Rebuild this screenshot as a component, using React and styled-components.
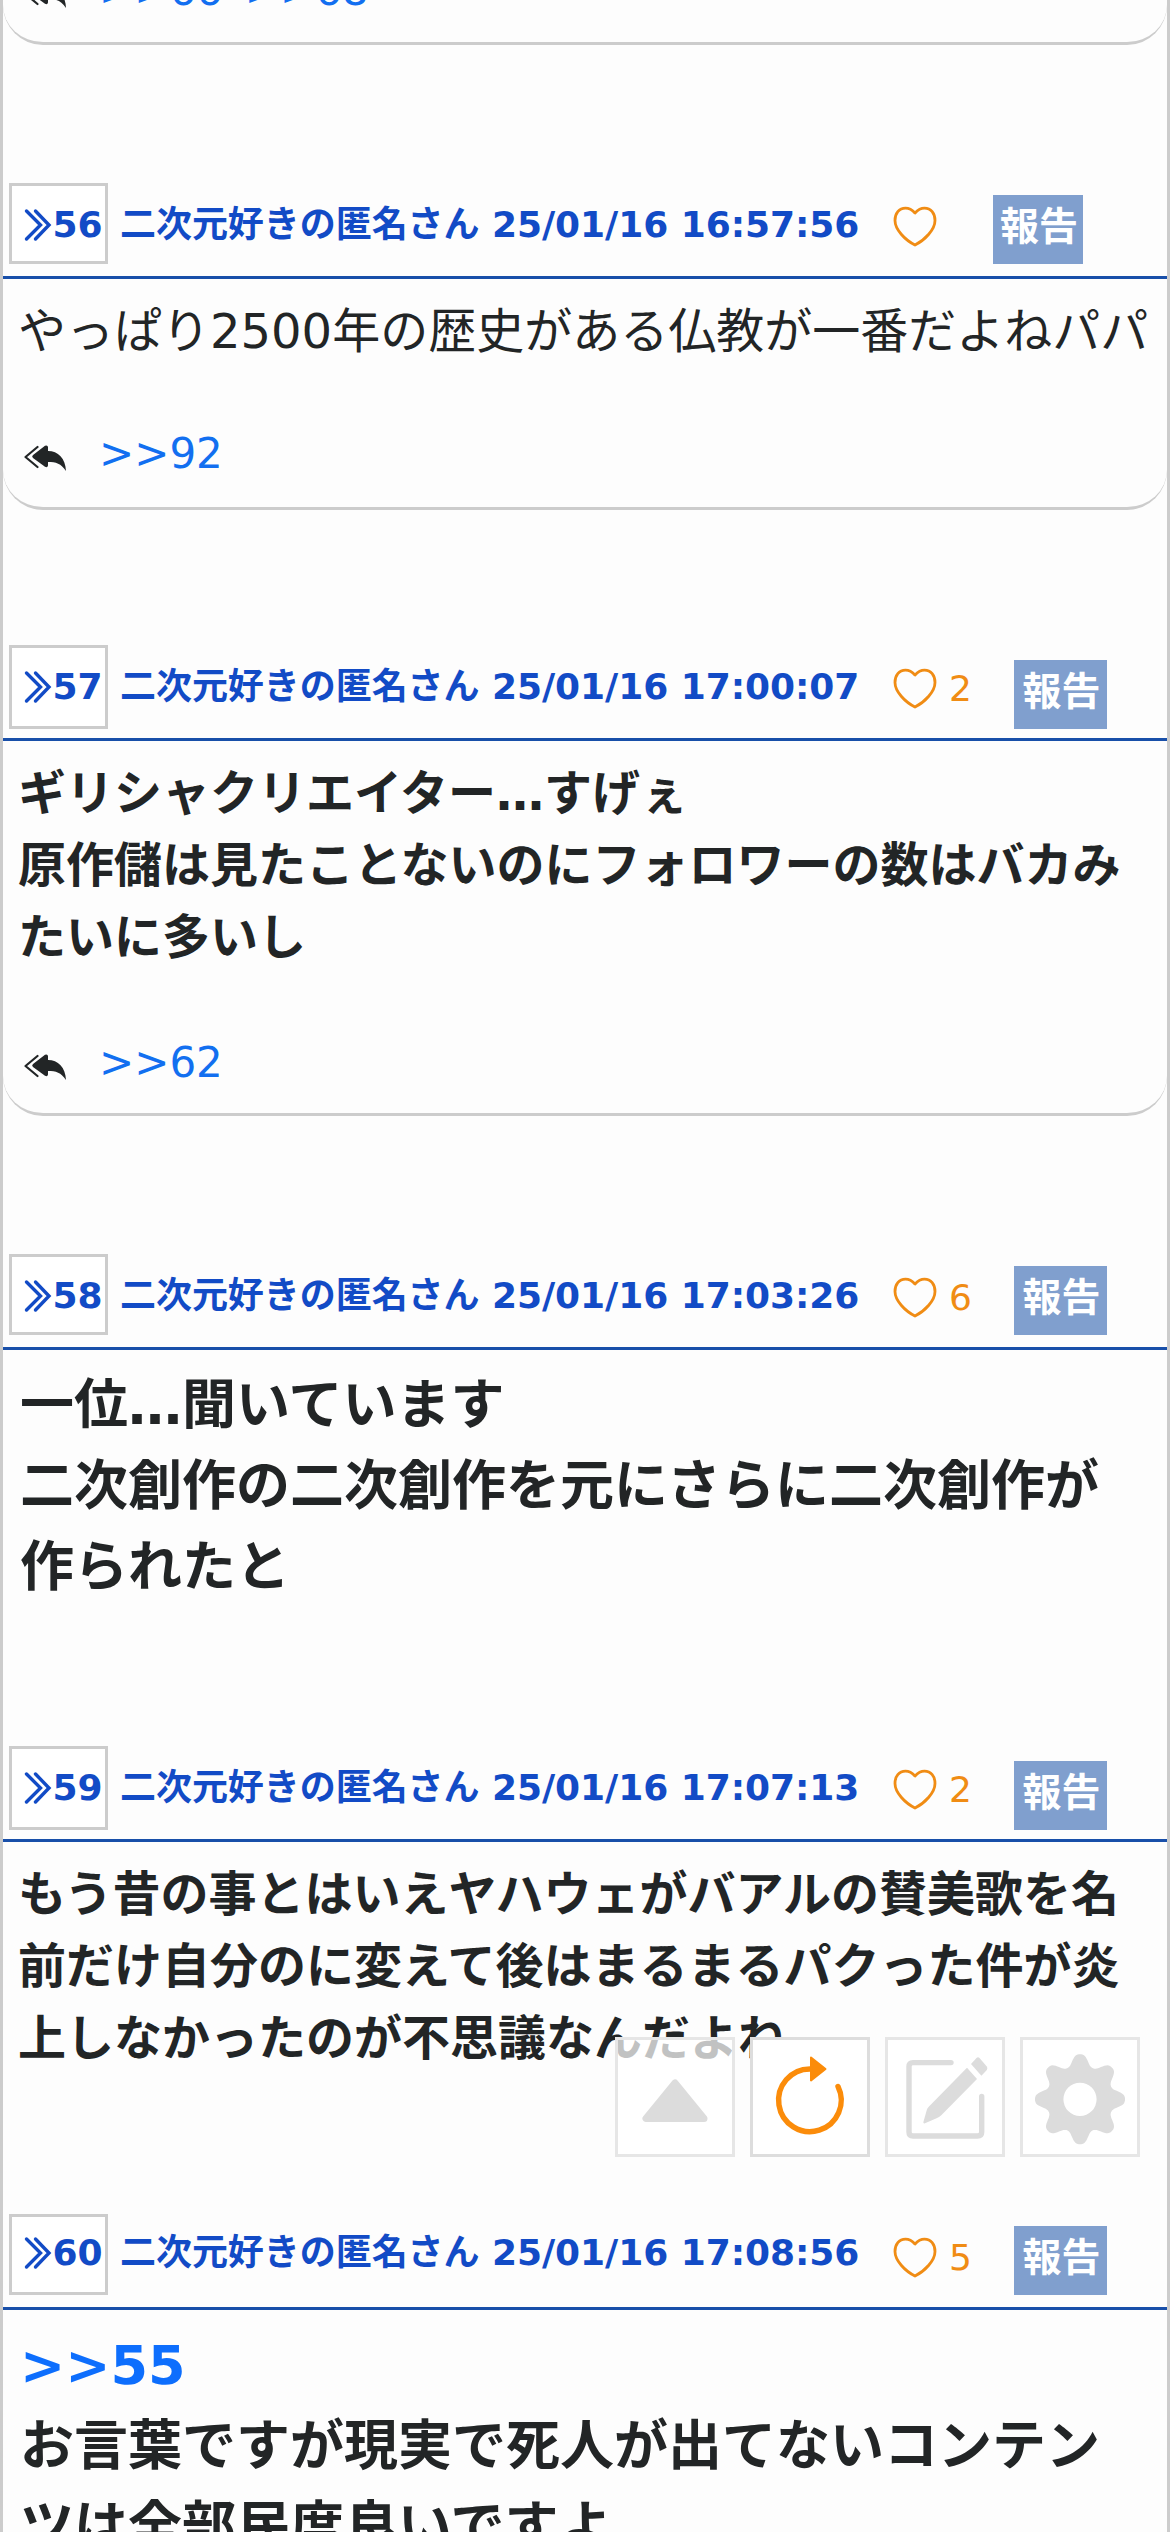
import React from "react";
import styled, { createGlobalStyle, css } from "styled-components";

const GlobalStyle = createGlobalStyle`
    * { box-sizing: border-box; }
    body {
        margin: 0;
        background-color: #fdfdfd;
        color: #222526;
        font-family: "DejaVu Sans", "Noto Sans CJK JP", sans-serif;
    }
`;

const Page = styled.main`
    height: 2532px;
    overflow: hidden;
    border-left: 3px solid #ccc;
    border-right: 3px solid #ccc;
`;

const Post = styled.article`
    margin-bottom: ${(p) => p.$gap}px;
`;

const PostHeader = styled.header`
    display: flex;
    align-items: flex-start;
    height: 96px;
    padding-left: 6px;
    border-bottom: 3px solid #184fa9;
    color: #124bc6;
    font-size: 36px;
    font-weight: bold;
    white-space: nowrap;
`;

const NumberBox = styled.div`
    display: flex;
    flex: none;
    width: 99px;
    height: ${(p) => p.$height}px;
    padding-left: 12px;
    border: 3px solid #ccc;
    background-color: white;
    line-height: ${(p) => (p.$raised ? 71 : 77)}px;

    svg {
        flex: none;
        margin: ${(p) => (p.$raised ? 19 : 22)}px 0.5px 0 0;
    }
`;

const Name = styled.span`
    flex: none;
    width: 740px;
    margin-left: 12px;
    letter-spacing: -0.05px;
    line-height: ${(p) => (p.$raised ? 77 : 83)}px;
`;

const Like = styled.div`
    display: flex;
    margin-left: 33px;
    color: #f08c14;
    font-weight: normal;
    line-height: 88px;

    svg {
        flex: none;
        margin: 23px 12px 0 0;
    }
`;

const ReportButton = styled.button`
    flex: none;
    width: ${(p) => (p.$wide ? 93 : 90)}px;
    height: 69px;
    margin: ${(p) => p.$top}px 0 0 ${(p) => (p.$wide ? 42 : 44)}px;
    padding: 0 0 6px 2px;
    border: 0;
    background-color: #809fce;
    color: white;
    font-family: inherit;
    font-size: 39px;
    font-weight: bold;
    line-height: 60px;
`;

const PostBody = styled.div`
    padding: ${(p) => (p.$large ? "15px 15px 0 17px" : "16px 15px 0")};

    ${(p) =>
        p.$replied &&
        css`
            border-bottom: 3px solid #ccc;
            border-radius: 0 0 40px 40px;
        `}
`;

const Text = styled.p`
    margin: 0;
    font-size: ${(p) => (p.$large ? 54 : 48)}px;
    font-weight: ${(p) => (p.$light ? "normal" : "bold")};
    line-height: 1.5;
    white-space: nowrap;
`;

const Anchor = styled.a`
    color: #0d6efd;
`;

const Replies = styled.div`
    display: flex;
    align-items: flex-start;
    height: ${(p) => p.$height}px;
    padding: ${(p) => p.$top}px 0 0 6px;
    font-size: 42px;
    line-height: 63px;

    svg {
        flex: none;
        margin: 22px 30px 0 0;
    }

    a {
        color: #126ff0;
        margin-right: 22px;
    }
`;

/* end of the post that is scrolled off the top */
const CutPost = styled.div`
    display: flex;
    align-items: flex-end;
    height: 45px;
    margin-bottom: 138px;
    padding-left: 15px;
    border-bottom: 3px solid #ccc;
    border-radius: 0 0 40px 40px;
`;

const FloatMenu = styled.nav`
    position: fixed;
    top: 2037px;
    right: 30px;
    display: flex;
    gap: 15px;
`;

const FloatButton = styled.button`
    width: 120px;
    height: 120px;
    padding: 0;
    border: 3px solid ${(p) => (p.$active ? "#ddd" : "#e6e6e6")};
    background-color: ${(p) => (p.$see ? "rgba(255, 255, 255, 0.72)" : "white")};
    color: ${(p) => (p.$active ? "#fb8c0a" : "#dcdcdc")};

    svg {
        display: block;
        margin: -3px;
    }
`;

const Chevrons = () => (
    <svg width="28" height="36" fill="none" stroke="currentColor" strokeWidth="3.4" strokeLinecap="round">
        <path d="M2.5 3 L16.5 17 L2.5 31" />
        <path d="M11.5 3 L25 17 L11.5 31" />
    </svg>
);

const Heart = () => (
    <svg width="44" height="42" fill="none" stroke="currentColor" strokeWidth="2.8" strokeLinejoin="round">
        <path d="M22 7 C18.5 3.2 15.5 2.2 12.5 2.2 C6 2.2 2 7.5 2 14.5 C2 23.5 12 34 22 39 C32 34 42 23.5 42 14.5 C42 7.5 38 2.2 31.5 2.2 C28.5 2.2 25.5 3.2 22 7 Z" />
    </svg>
);

const ReplyAll = () => (
    <svg width="45" height="30" fill="#222526">
        <path d="M13.5 3 L1.5 13 L13.5 23" fill="none" stroke="#222526" strokeWidth="2.2" strokeLinecap="round" strokeLinejoin="round" />
        <path d="M9 11 L21 1.8 Q23.6 .6 24 3 V7 C34 7 41.5 14 42 27 C37 19.5 32 18 24 18 V21.5 Q23.6 24 21 22.8 L9 14 Q7.3 12.5 9 11 Z" />
    </svg>
);

const UpIcon = () => (
    <svg width="120" height="120" fill="currentColor" stroke="currentColor" strokeWidth="7" strokeLinejoin="round">
        <path d="M60 46 L31 81.5 H89 Z" />
    </svg>
);

const ReloadIcon = () => (
    <svg width="120" height="120">
        <path d="M60 32 A31.3 31.3 0 1 0 88 49.5" fill="none" stroke="currentColor" strokeWidth="5.4" strokeLinecap="round" />
        <path d="M61 20.5 L75.5 32 L61 43.5 Z" fill="currentColor" stroke="currentColor" strokeWidth="2" strokeLinejoin="round" />
    </svg>
);

const EditIcon = () => (
    <svg width="120" height="120" fill="currentColor">
        <path d="M66 25.6 H28 Q24 25.6 24 29.6 V95 Q24 99 28 99 H92.5 Q96.7 99 96.7 95 V59.5" fill="none" stroke="currentColor" strokeWidth="5.4" strokeLinecap="round" />
        <path d="M82 30.7 L92 42 L56.5 78 Q54 80.5 51 81.5 L40 86.3 Q38 86.8 38.4 85 L41.5 74 Q42 71.5 43.5 70 Z" />
        <path d="M86 27 L91.5 21 Q93 19.7 94.5 21 L101.8 29.5 Q103 31.3 101.8 33 L96.4 38.7 Z" />
    </svg>
);

// eight round teeth, one every 45 degrees
const gear = Array.from({ length: 240 }, (_, i) => {
    const deg = i * 1.5;
    const fromTooth = Math.abs(((deg + 22.5) % 45) - 22.5);
    const r = 33.5 + 11.5 * Math.exp(-Math.pow(fromTooth / 12.8, 2.8));
    const a = (deg * Math.PI) / 180;
    return `${(60 + r * Math.cos(a)).toFixed(1)} ${(62.3 + r * Math.sin(a)).toFixed(1)}`;
}).join(" L");

const GearIcon = () => (
    <svg width="120" height="120" fill="currentColor">
        <path fillRule="evenodd" d={`M${gear} Z M76.6 62.3 A16.6 16.6 0 1 0 43.4 62.3 A16.6 16.6 0 1 0 76.6 62.3 Z`} />
    </svg>
);

const posts = [
    { no: 56, time: "16:57:56", light: true, box: 81, gap: 135, lines: ["やっぱり2500年の歴史がある仏教が一番だよねパパ"], reply: ">>92", replyTop: 55 },
    { no: 57, time: "17:00:07", likes: 2, box: 84, gap: 138, lines: ["ギリシャクリエイター…すげぇ", "原作儲は見たことないのにフォロワーの数はバカみ", "たいに多いし"], reply: ">>62", replyTop: 58 },
    { no: 58, time: "17:03:26", likes: 6, box: 81, gap: 138, large: true, lines: ["一位…聞いています", "二次創作の二次創作を元にさらに二次創作が", "作られたと"] },
    { no: 59, time: "17:07:13", likes: 2, box: 84, gap: 140, lines: ["もう昔の事とはいえヤハウェがバアルの賛美歌を名", "前だけ自分のに変えて後はまるまるパクった件が炎", "上しなかったのが不思議なんだよね"] },
    { no: 60, time: "17:08:56", likes: 5, box: 81, gap: 0, raised: true, large: true, anchor: ">>55", lines: ["お言葉ですが現実で死人が出てないコンテン", "ツは全部民度良いですよ"] },
];

export default function App() {
    return (
        <>
            <GlobalStyle />
            <Page>
                <CutPost>
                    <Replies $height={83} $top={0}>
                        <ReplyAll />
                        <a>&gt;&gt;66</a>
                        <a>&gt;&gt;68</a>
                    </Replies>
                </CutPost>
                {posts.map((post) => (
                    <Post key={post.no} $gap={post.gap}>
                        <PostHeader>
                            <NumberBox $height={post.box} $raised={post.raised}>
                                <Chevrons />
                                {post.no}
                            </NumberBox>
                            <Name $raised={post.raised}>二次元好きの匿名さん 25/01/16 {post.time}</Name>
                            <Like>
                                <Heart />
                                {post.likes}
                            </Like>
                            <ReportButton $wide={!!post.likes} $top={post.box - 69}>報告</ReportButton>
                        </PostHeader>
                        <PostBody $replied={!!post.reply} $large={post.large}>
                            <Text $large={post.large} $light={post.light}>
                                {post.anchor && <><Anchor>{post.anchor}</Anchor><br /></>}
                                {post.lines.map((line) => (
                                    <React.Fragment key={line}>{line}<br /></React.Fragment>
                                ))}
                            </Text>
                            {post.reply && (
                                <Replies $height={140} $top={post.replyTop}>
                                    <ReplyAll />
                                    <a>{post.reply}</a>
                                </Replies>
                            )}
                        </PostBody>
                    </Post>
                ))}
            </Page>
            <FloatMenu>
                <FloatButton $see><UpIcon /></FloatButton>
                <FloatButton $active><ReloadIcon /></FloatButton>
                <FloatButton><EditIcon /></FloatButton>
                <FloatButton><GearIcon /></FloatButton>
            </FloatMenu>
        </>
    );
}
